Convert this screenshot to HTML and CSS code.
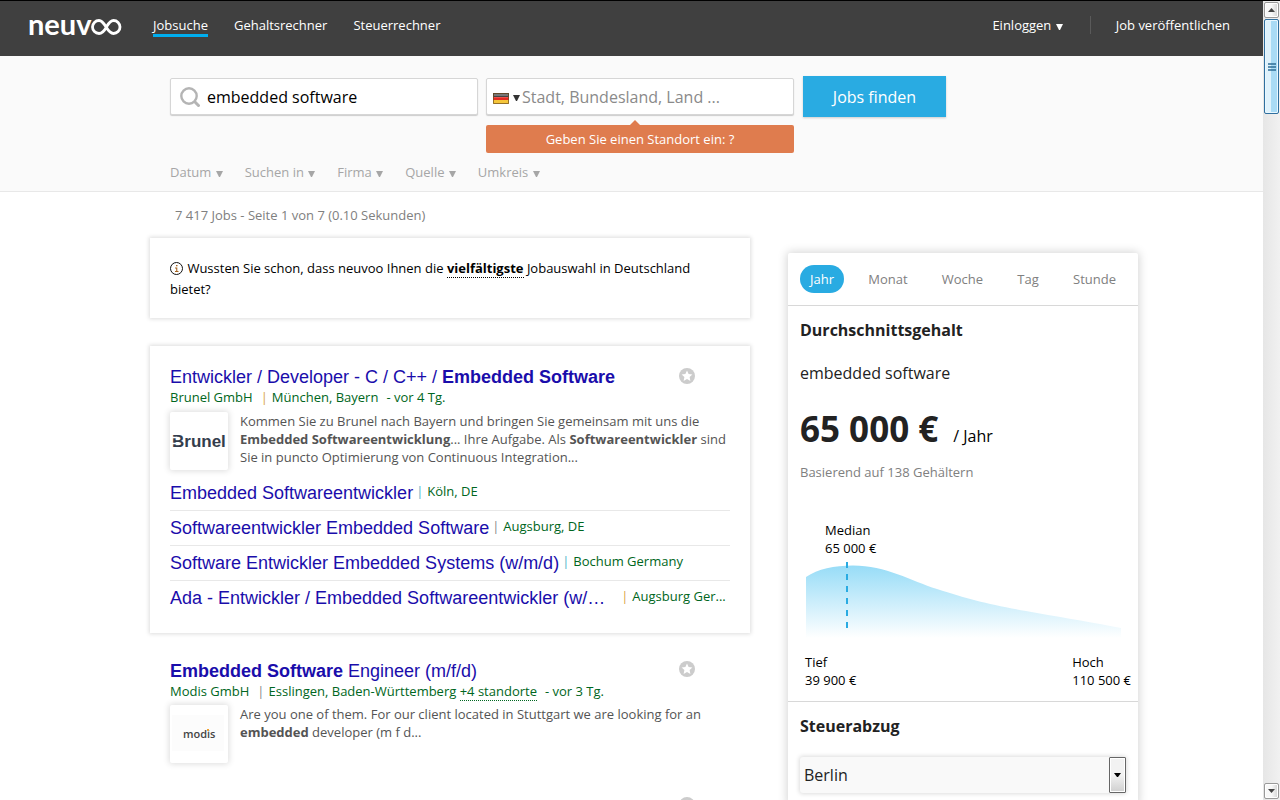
FILE: index.html
```html
<!DOCTYPE html>
<html lang="de">
<head>
<meta charset="utf-8">
<title>neuvoo</title>
<link rel="stylesheet" href="styles.css">
</head>
<body>
<svg class="defs" aria-hidden="true">
  <symbol id="star" viewBox="0 0 16 16"><circle cx="8" cy="8" r="8" fill="#ccc"/><path d="M8 2.600l1.600 3.500 3.800.4-2.800 2.600.8 3.800L8 11l-3.400 1.900.8-3.800-2.800-2.600 3.800-.4z" fill="#fff"/></symbol>
</svg>
<div class="page">
  <header class="topbar">
    <a class="logo" href="#" aria-label="neuvoo">
      <svg width="94" height="38" viewBox="0 0 94 38">
        <text class="logo-text" x="-1" y="27">neuv</text>
        <path d="M77.500 19C75.500 22.600 73.500 25.500 70 25.500A6.500 6.500 0 0 1 70 12.500C76.500 12.500 77.500 25.500 84.500 25.500A6.500 6.500 0 0 0 84.500 12.500C81 12.500 79.500 15.500 77.500 19" fill="none" stroke="#fff" stroke-width="2.800"/>
      </svg>
    </a>
    <nav class="nav">
      <a class="active" href="#">Jobsuche</a>
      <a href="#">Gehaltsrechner</a>
      <a href="#">Steuerrechner</a>
    </nav>
    <div class="account">
      <button class="login" type="button">Einloggen <span class="caret"></span></button>
      <a class="publish" href="#">Job veröffentlichen</a>
    </div>
  </header>

  <section class="search">
    <form class="search-form">
      <label class="field">
        <svg width="20" height="20" viewBox="0 0 20 20" fill="none" stroke="#b4b4b4"><circle cx="9" cy="9" r="7.700" stroke-width="2.400"/><path d="M14 14l5.500 5.500" stroke-width="3"/></svg>
        <input type="text" value="embedded software" aria-label="Jobsuche">
      </label>
      <div class="location">
        <label class="field field-location">
          <svg width="16" height="11" viewBox="0 0 16 11">
            <path d="M0 0h16v4H0z" fill="#444"/><path d="M0 4h16v3H0z" fill="#e32a22"/><path d="M0 7h16v4H0z" fill="#f5c63a"/>
            <path d="M1 1h14v2H1z" fill="#777"/><path d="M1 4h14v1H1z" fill="#f0504a"/><path d="M.5.5h15v10H.5z" fill="none" stroke="#6d4d22" stroke-opacity=".7"/>
          </svg>
          <span class="caret"></span>
          <input type="text" placeholder="Stadt, Bundesland, Land ..." aria-label="Standort">
        </label>
        <div class="hint">Geben Sie einen Standort ein: ?</div>
      </div>
      <button class="submit" type="submit">Jobs finden</button>
    </form>
    <div class="filters">
      <button type="button">Datum <span class="caret"></span></button>
      <button type="button">Suchen in <span class="caret"></span></button>
      <button type="button">Firma <span class="caret"></span></button>
      <button type="button">Quelle <span class="caret"></span></button>
      <button type="button">Umkreis <span class="caret"></span></button>
    </div>
  </section>

  <main class="content">
    <div class="results">
      <p class="count">7 417 Jobs - Seite 1 von 7 (0.10 Sekunden)</p>
      <div class="card tip">
        <svg width="14" height="13" viewBox="0 0 14 13"><circle cx="6.500" cy="6.500" r="6" fill="none" stroke="#111"/><path d="M6 3h1.500v1.300H6zM5 5.500h2.300V9H8.500v.9H5V9h1.200V6.400H5z" fill="#a5631d"/></svg>
        Wussten Sie schon, dass neuvoo Ihnen die <b>vielfältigste</b> Jobauswahl in Deutschland bietet?
      </div>

      <article class="card job">
        <button class="star" type="button" aria-label="Merken"><svg width="16" height="16"><use href="#star"/></svg></button>
        <h2><a href="#">Entwickler / Developer - C / C++ / <b>Embedded Software</b></a></h2>
        <p class="meta"><span>Brunel GmbH</span><span class="bar gold">|</span><span>München, Bayern</span><span class="age">- vor 4 Tg.</span></p>
        <div class="summary">
          <div class="brand">
            <svg width="58" height="58" viewBox="0 0 58 58"><text class="brunel" x="2" y="35">Brunel</text><path d="M2 25.500h5M2 31.500h4" stroke="#fff" stroke-width="1.500"/></svg>
          </div>
          <p>Kommen Sie zu Brunel nach Bayern und bringen Sie gemeinsam mit uns die <b>Embedded Softwareentwicklung</b>... Ihre Aufgabe. Als <b>Softwareentwickler</b> sind Sie in puncto Optimierung von Continuous Integration...</p>
        </div>
        <ul class="related">
          <li><a href="#">Embedded Softwareentwickler</a><span class="bar blue">|</span><span class="place">Köln, DE</span></li>
          <li><a href="#">Softwareentwickler Embedded Software</a><span class="bar">|</span><span class="place">Augsburg, DE</span></li>
          <li><a href="#">Software Entwickler Embedded Systems (w/m/d)</a><span class="bar blue">|</span><span class="place">Bochum Germany</span></li>
          <li class="wide"><a href="#">Ada - Entwickler / Embedded Softwareentwickler (w/…</a><span class="bar gold">|</span><span class="place">Augsburg Ger...</span></li>
        </ul>
      </article>

      <article class="job plain">
        <button class="star" type="button" aria-label="Merken"><svg width="16" height="16"><use href="#star"/></svg></button>
        <h2><a href="#"><b>Embedded Software</b> Engineer (m/f/d)</a></h2>
        <p class="meta"><span>Modis GmbH</span><span class="bar">|</span><span>Esslingen, Baden-Württemberg <a href="#">+4 standorte</a></span><span class="age">- vor 3 Tg.</span></p>
        <div class="summary">
          <div class="brand">
            <svg width="58" height="58" viewBox="0 0 58 58"><path d="M2 10h52v36H2z" fill="#fcfcfc"/><text class="modis" x="13" y="33">modis</text><path d="M37 24h2v2h-2z" fill="#f0a030"/></svg>
          </div>
          <p>Are you one of them. For our client located in Stuttgart we are looking for an <b>embedded</b> developer (m f d...</p>
        </div>
      </article>

      <article class="job plain">
        <button class="star" type="button" aria-label="Merken"><svg width="16" height="16"><use href="#star"/></svg></button>
      </article>
    </div>

    <aside class="salary">
      <div class="tabs">
        <button class="active" type="button">Jahr</button>
        <button type="button">Monat</button>
        <button type="button">Woche</button>
        <button type="button">Tag</button>
        <button type="button">Stunde</button>
      </div>
      <div class="average">
        <h3>Durchschnittsgehalt</h3>
        <p class="role">embedded software</p>
        <p class="amount"><strong>65 000 €</strong><span>/ Jahr</span></p>
        <p class="basis">Basierend auf 138 Gehältern</p>
        <div class="median">Median<br>65 000 €</div>
        <svg class="curve" viewBox="0 0 315 78" role="img" aria-label="Median">
          <linearGradient id="fade" x1="0" y1="0" x2="0" y2="1"><stop offset="0" stop-color="#97dcf7"/><stop offset="1" stop-color="#fff"/></linearGradient>
          <path d="M0 17C12 9 28 5.500 47 5.500C80 5.500 105 21 131 29C165 40 185 45 231 53C260 58 290 63 315 68V78H0Z" fill="url(#fade)"/>
          <path d="M41 2V68" stroke="#29abe2" stroke-width="2" stroke-dasharray="6 6"/>
        </svg>
        <div class="range"><div>Tief<br>39 900 €</div><div>Hoch<br>110 500 €</div></div>
      </div>
      <div class="tax">
        <h3>Steuerabzug</h3>
        <div class="select">
          <select aria-label="Steuerabzug"><option>Berlin</option></select>
          <span class="drop"><span class="caret"></span></span>
        </div>
      </div>
    </aside>
  </main>
</div>

<div class="scrollbar" aria-hidden="true">
  <span class="step"><svg width="7" height="4"><path d="M0 4l3.500-4L7 4z" fill="#444"/></svg></span>
  <span class="thumb"><svg width="8" height="8"><path d="M0 1h8M0 4h8M0 7h8" stroke="#2f6f96" stroke-width="1.500"/></svg></span>
  <span class="step last"><svg width="7" height="4"><path d="M0 0l3.500 4L7 0z" fill="#444"/></svg></span>
</div>
</body>
</html>
```

FILE: styles.css
```css
* { box-sizing: border-box; }
body {
  margin: 0;
  height: 100vh;
  display: flex;
  overflow: hidden;
  border-top: 1px solid #000;
  background: #fff;
  color: #000;
  font: 13px/18px "Open Sans", sans-serif;
}
h2, h3, p, ul { margin: 0; padding: 0; }
button { border: 0; padding: 0; background: none; font: inherit; color: inherit; cursor: pointer; }
a { color: inherit; text-decoration: none; }
.defs { position: absolute; width: 0; height: 0; }
.page { flex: 1; min-width: 0; overflow: hidden; }
.caret {
  display: inline-block;
  width: 7px;
  margin-left: 1px;
  border: 3px solid transparent;
  border-top: 6px solid currentColor;
  border-bottom: 0;
}

/* Header */
.topbar {
  display: flex;
  align-items: center;
  height: 55px;
  padding: 0 33px 4px 29px;
  background: #404040;
  color: #fff;
}
.logo { display: flex; }
.logo svg { overflow: visible; }
.logo-text { font: 700 29px Lato, sans-serif; fill: #fff; }
.nav { display: flex; gap: 26px; margin-left: 30px; }
.nav a { border-bottom: 3px solid transparent; }
.nav .active { border-color: #00aeef; }
.account { display: flex; align-items: center; margin-left: auto; padding-bottom: 3px; }
.login { padding-right: 27px; border-right: 1px solid #5a5a5a; }
.publish { padding-left: 25px; }

/* Search */
.search {
  height: 136px;
  padding: 22px 0 0 170px;
  background: #fafafa;
  border-bottom: 1px solid #e8e8e8;
}
.search-form { display: flex; align-items: flex-start; }
.field {
  display: flex;
  align-items: center;
  width: 308px;
  height: 37px;
  padding: 0 9px;
  gap: 7px;
  background: #fff;
  border: 1px solid #d6d6d6;
  border-radius: 2px;
  box-shadow: 0 1px 1px #ccc;
}
.field svg { flex: none; }
.field input {
  flex: 1;
  min-width: 0;
  border: 0;
  padding: 0;
  outline: 0;
  background: none;
  font: 16px/24px "Open Sans", sans-serif;
  color: #000;
}
.field input::placeholder { color: #8a8a8a; opacity: 1; }
.location { margin: 0 9px 0 8px; }
.field-location { padding: 0 6px; gap: 4px; color: #333; }
.field-location svg { margin-top: 3px; }
.field-location .caret { margin: 3px 0 0; }
.field-location input { margin-left: -2px; }
.hint {
  position: relative;
  height: 28px;
  margin-top: 10px;
  border-radius: 2px;
  background: #df7c4e;
  color: #fff;
  line-height: 28px;
  text-align: center;
}
.hint::before {
  content: "";
  position: absolute;
  left: 50%;
  top: -5px;
  margin-left: -10px;
  border: 5px solid transparent;
  border-top: 0;
  border-bottom-color: #df7c4e;
}
.submit {
  width: 143px;
  height: 41px;
  margin-top: -2px;
  background: #29abe2;
  color: #fff;
  font-size: 16px;
  box-shadow: 0 1px 2px #ccc;
}
.filters { display: flex; gap: 22px; margin-top: 10px; color: #a6a6a6; }

/* Results */
.content { display: flex; align-items: flex-start; gap: 38px; padding-left: 150px; }
.results { width: 600px; }
.count { padding: 14px 25px; color: #808080; }
.card { background: #fff; box-shadow: 0 0 4px 1px #ddd; }
.tip { padding: 20px 50px 18px 20px; margin-bottom: 28px; line-height: 21px; }
.tip svg { vertical-align: -2px; }
.tip b { border-bottom: 1px dotted #000; }
.job { position: relative; padding: 20px 20px 17px; }
.job h2 { font: 18px/22px "Liberation Sans", Arial, sans-serif; color: #1a0dab; }
.star { position: absolute; top: 22px; right: 55px; width: 16px; height: 16px; }
.star svg { display: block; }
.meta { display: flex; color: #006621; }
.meta a { border-bottom: 1px dotted #006621; }
.bar { margin: 0 4px 0 8px; color: #888; }
.gold { color: #d9a441; }
.blue { color: #4fb3c8; }
.age { margin-left: 8px; }
.summary { display: flex; gap: 12px; margin: 6px 0; color: #545454; }
.brand { flex: none; width: 58px; height: 58px; border-radius: 2px; box-shadow: 0 0 6px 1px #ddd; }
.brand svg { display: block; }
.brunel { font: 700 17px "Liberation Sans", Arial, sans-serif; fill: #343d4c; }
.modis { font: 600 11px "Open Sans", sans-serif; fill: #444; }
.related { list-style: none; }
.related li { display: flex; height: 35px; line-height: 30px; border-bottom: 1px solid #e8e8e8; }
.related li:last-child { border-bottom: 0; }
.related a { font: 18px/34px "Liberation Sans", Arial, sans-serif; color: #1a0dab; }
.related .bar { margin: 0 4px 0 3px; }
.related .wide .bar { margin-left: 16px; }
.place { color: #006621; }
.plain { height: 136px; padding-top: 27px; }
.plain .summary { margin-top: 5px; }
.plain .star { top: 28px; }

/* Salary */
.salary { width: 350px; margin-top: 61px; border-radius: 2px; background: #fff; box-shadow: 0 0 10px 1px #d4d4d4; }
.salary h3 { font-size: 16px; line-height: 24px; font-weight: 700; color: #222; }
.tabs { display: flex; justify-content: space-between; padding: 12px; border-bottom: 1px solid #d8d8d8; color: #808080; }
.tabs button { height: 28px; padding: 0 10px; border-radius: 14px; }
.tabs .active { background: #29abe2; color: #fff; }
.average { padding: 12px 12px 12px; border-bottom: 1px solid #d8d8d8; }
.role { margin-top: 19px; font-size: 16px; line-height: 24px; color: #222; }
.amount { display: flex; align-items: baseline; gap: 15px; margin-top: 20px; font-size: 16px; line-height: 48px; }
.amount strong { font-size: 35px; color: #222; }
.basis { margin-top: 3px; color: #808080; }
.median { margin: 40px 0 0 25px; }
.curve { display: block; width: 315px; height: 78px; margin: 3px 6px 0; }
.range { display: flex; justify-content: space-between; margin: 15px -5px 0 5px; }
.tax { padding: 12px; }
.select { position: relative; height: 36px; margin-top: 19px; }
.select select {
  appearance: none;
  width: 100%;
  height: 36px;
  padding: 0 4px;
  border: 0;
  border-radius: 3px;
  background: #f9f9f9;
  box-shadow: 0 0 4px 1px #ddd;
  font: 16px/24px "Open Sans", sans-serif;
  color: #222;
}
.drop {
  position: absolute;
  top: 0;
  right: 0;
  bottom: 0;
  display: flex;
  align-items: center;
  justify-content: center;
  width: 17px;
  border: 1px solid #666;
  border-radius: 1px;
  background: linear-gradient(#f2f2f2 50%, #cfcfcf);
  box-shadow: inset 0 0 0 1px #fff;
  pointer-events: none;
}
.drop .caret { margin: 0; border-top-width: 4px; color: #000; }

/* Scrollbar */
.scrollbar { display: flex; flex-direction: column; gap: 1px; width: 17px; padding: 1px; background: linear-gradient(90deg, #e6e6e6, #f1f1f1); }
.scrollbar span { display: flex; align-items: center; justify-content: center; }
.step { height: 16px; border: 1px solid #999; border-radius: 2px; background: linear-gradient(90deg, #f8f8f8 50%, #d4d4d4); box-shadow: inset 0 0 0 1px #fff; }
.last { margin-top: auto; }
.thumb { height: 95px; border: 1px solid #2f6f9f; border-radius: 2px; background: linear-gradient(90deg, #dff2fc 45%, #a9dbf5 46%); box-shadow: inset 0 0 0 1px #e8f7ff; }
```
